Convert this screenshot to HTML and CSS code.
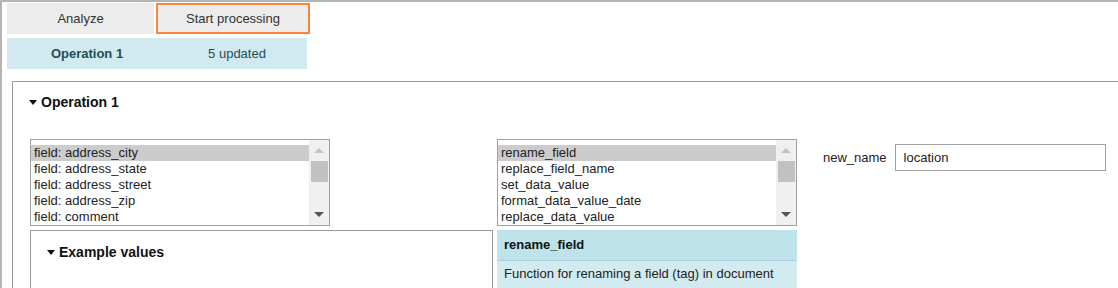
FILE: index.html
```html
<!DOCTYPE html>
<html lang="en">
<head>
  <meta charset="utf-8" />
  <title>Operations</title>
  <link rel="stylesheet" href="styles.css">
</head>
<body>
  <div class="frame">
    <div class="tabs">
      <div class="tab">Analyze</div>
      <div class="tab active">Start processing</div>
    </div>

    <div class="status">
      <div class="status-name">Operation 1</div>
      <div class="status-count">5 updated</div>
    </div>

    <section class="panel">
      <h2 class="toggle"><span class="caret"></span>Operation 1</h2>

      <div class="columns">
        <div class="col-fields">
          <div class="listbox">
            <div class="items">
              <div class="item selected">field: address_city</div>
              <div class="item">field: address_state</div>
              <div class="item">field: address_street</div>
              <div class="item">field: address_zip</div>
              <div class="item">field: comment</div>
            </div>
            <div class="scrollbar">
              <span class="arrow up"></span>
              <span class="thumb"></span>
              <span class="arrow down"></span>
            </div>
          </div>

          <div class="examples">
            <h3 class="toggle small"><span class="caret"></span>Example values</h3>
          </div>
        </div>

        <div class="col-funcs">
          <div class="listbox">
            <div class="items">
              <div class="item selected">rename_field</div>
              <div class="item">replace_field_name</div>
              <div class="item">set_data_value</div>
              <div class="item">format_data_value_date</div>
              <div class="item">replace_data_value</div>
            </div>
            <div class="scrollbar">
              <span class="arrow up"></span>
              <span class="thumb"></span>
              <span class="arrow down"></span>
            </div>
          </div>

          <div class="info">
            <div class="info-title">rename_field</div>
            <div class="info-text">Function for renaming a field (tag) in document</div>
          </div>
        </div>

        <div class="col-params">
          <label class="param">
            <span class="param-name">new_name</span>
            <span class="param-input">location</span>
          </label>
        </div>
      </div>
    </section>
  </div>
</body>
</html>
```

FILE: styles.css
```css
body {
  margin: 0;
  font-family: "Liberation Sans", Arial, sans-serif;
  font-size: 13px;
  color: #222;
  background: white;
}

.frame {
  height: 286px;
  border-top: 2px solid #b5b5b5;
  border-left: 2px solid #b5b5b5;
  overflow: hidden;
}

.tabs {
  display: flex;
  gap: 2px;
  margin: 1px 0 0 5px;
}

.tab {
  width: 147px;
  height: 31px;
  background: #ececec;
  color: #333;
  display: flex;
  align-items: center;
  justify-content: center;
  box-sizing: border-box;
}

.tab.active {
  width: 154px;
  border: 2px solid #f5883a;
}

.status {
  display: flex;
  width: 300px;
  height: 31px;
  margin: 4px 0 0 5px;
  background: #d1eaf0;
  color: #1f4e58;
}

.status div {
  display: flex;
  align-items: center;
  justify-content: center;
}

.status-name {
  width: 160px;
  font-weight: bold;
}

.status-count { width: 140px; }

.panel {
  margin: 12px 0 0 10px;
  border-top: 1px solid #9a9a9a;
  border-left: 1px solid #9a9a9a;
  padding: 12px 0 0 16px;
  height: 200px;
}

.toggle {
  margin: 0;
  font-size: 14px;
  font-weight: bold;
  color: #111;
  display: flex;
  align-items: center;
  height: 16px;
}

.caret {
  width: 0;
  height: 0;
  border-left: 4px solid transparent;
  border-right: 4px solid transparent;
  border-top: 5px solid #111;
  margin-right: 4px;
}

.columns {
  display: flex;
  margin-top: 29px;
  margin-left: 1px;
}

.col-fields {
  width: 463px;
  display: flex;
  flex-direction: column;
  gap: 4px;
}

.col-funcs {
  width: 300px;
  margin-left: 4px;
  display: flex;
  flex-direction: column;
  gap: 4px;
}

.listbox {
  width: 300px;
  height: 87px;
  box-sizing: border-box;
  border: 1px solid #a0a0a0;
  display: flex;
  background: white;
}

.items {
  flex: 1;
  padding-top: 5px;
}

.item {
  height: 16px;
  line-height: 16px;
  padding-left: 3px;
  white-space: nowrap;
}

.item.selected { background: #cccccc; }

.scrollbar {
  width: 20px;
  background: #f0f0f0;
  display: flex;
  flex-direction: column;
  align-items: center;
  position: relative;
}

.thumb {
  width: 17px;
  height: 21px;
  background: #c1c1c1;
  margin-top: 1px;
}

.arrow {
  width: 0;
  height: 0;
  border-left: 5px solid transparent;
  border-right: 5px solid transparent;
  margin: 0 auto;
}

.arrow.up {
  border-bottom: 5px solid #c2c2c2;
  margin-top: 8px;
  margin-bottom: 7px;
}

.arrow.down {
  border-top: 5px solid #555;
  margin-top: auto;
  margin-bottom: 8px;
}

.examples {
  border: 1px solid #9a9a9a;
  height: 80px;
  padding: 13px 0 0 16px;
}

.examples .toggle { font-size: 14px; }

.info {
  background: #d2ebf0;
}

.info-title {
  background: #bee3ea;
  font-weight: bold;
  height: 30px;
  line-height: 30px;
  padding-left: 7px;
  border-bottom: 1px solid #a6d1da;
  color: #111;
}

.info-text {
  padding: 5px 7px 0;
  line-height: 16px;
  height: 40px;
}

.col-params {
  margin-left: 26px;
  padding-top: 5px;
}

.param {
  display: flex;
  align-items: center;
  gap: 8px;
}

.param-name { color: #222; }

.param-input {
  width: 211px;
  height: 27px;
  box-sizing: border-box;
  border: 1px solid #a0a0a0;
  padding-left: 8px;
  display: flex;
  align-items: center;
}
```
